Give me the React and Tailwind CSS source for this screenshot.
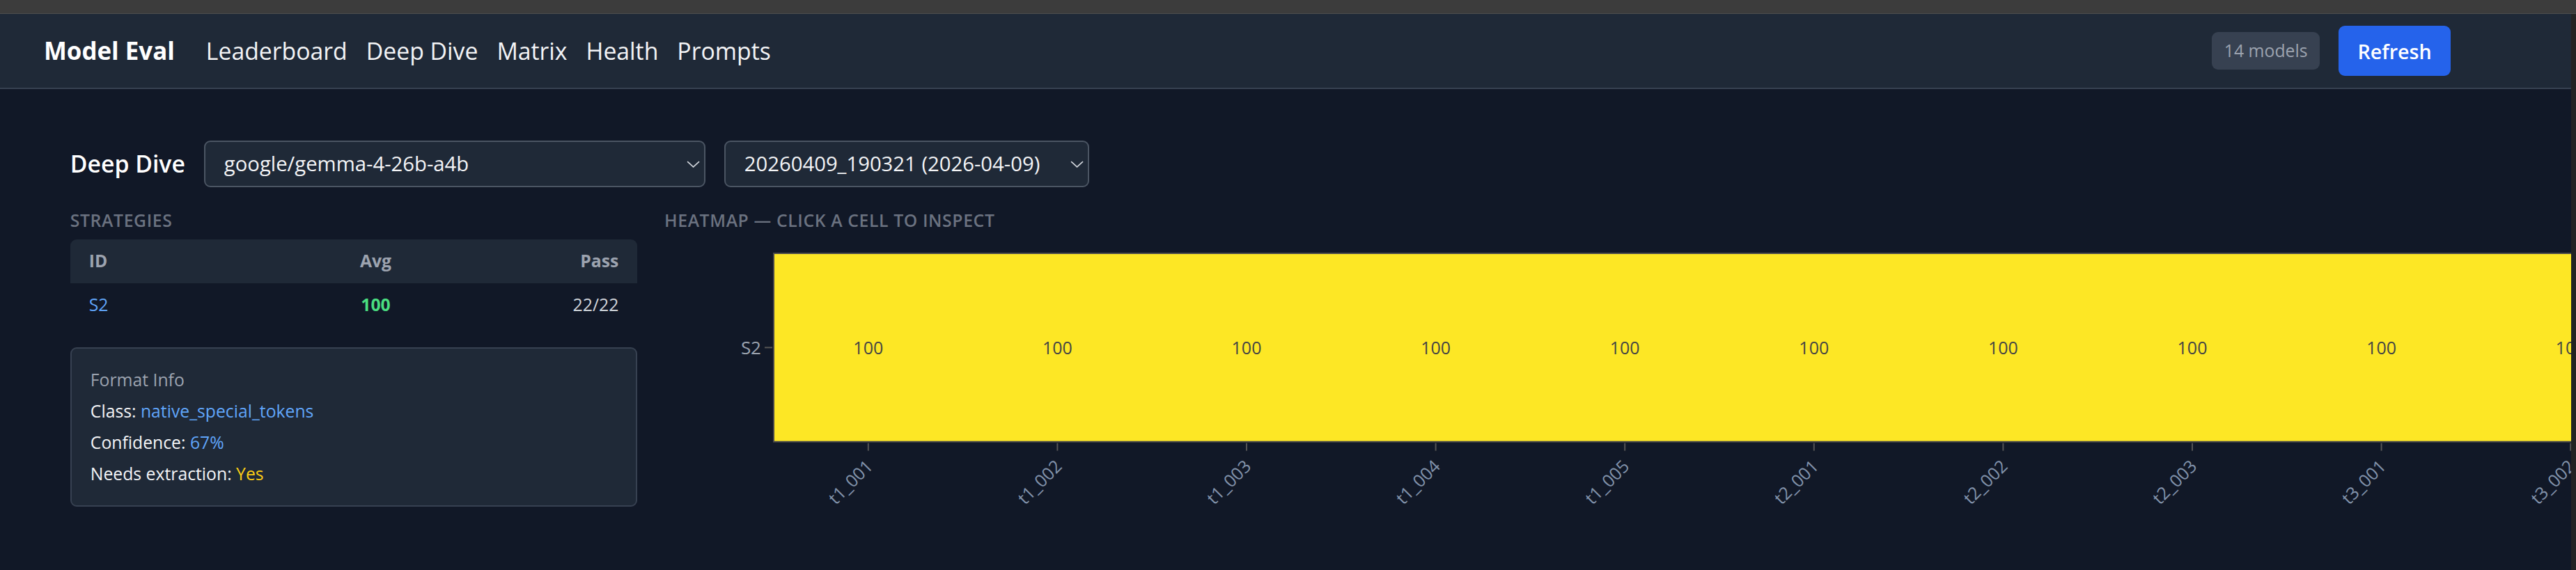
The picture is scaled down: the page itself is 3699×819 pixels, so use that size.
import React from 'react';

const NAV_LINKS = ['Leaderboard', 'Deep Dive', 'Matrix', 'Health', 'Prompts'];

const TASKS = [
  't1_001', 't1_002', 't1_003', 't1_004', 't1_005',
  't2_001', 't2_002', 't2_003', 't3_001', 't3_002', 't3_003',
];

// the whole page is drawn at 2.25x, the svg below is laid out in screen pixels
const SCALE = 2.25;

const Select = ({ value, className }) => (
  <div className={`relative ${className}`}>
    <select
      defaultValue={value}
      className="w-full appearance-none rounded border border-[#4b5563] bg-[#1f2937] py-1 pl-3 pr-6 text-[13px] leading-5 text-[#f3f4f6] outline-none"
    >
      <option value={value}>{value}</option>
    </select>
    <svg
      className="pointer-events-none absolute right-[3.5px] top-1/2 -translate-y-1/2"
      width="8.5"
      height="5"
      viewBox="0 0 17 10"
      fill="none"
    >
      <polyline points="1,1.5 8.5,8.5 16,1.5" stroke="#d1d5db" strokeWidth="1.5" />
    </svg>
  </div>
);

const Heatmap = () => {
  const cell = 271.6;
  const left = 157;
  const top = 20;
  const height = 270.7;
  const mid = top + height / 2;
  const plotW = cell * TASKS.length;
  const W = left + plotW + 20;
  const H = 430;

  return (
    <svg width={W / SCALE} height={H / SCALE} viewBox={`0 0 ${W} ${H}`} className="block">
      <rect x={left} y={top} width={plotW} height={height} fill="#fde725" stroke="#4b4b4b" strokeWidth="2" />
      {/* y axis */}
      <line x1={144} x2={155} y1={mid} y2={mid} stroke="#555" strokeWidth="2" />
      <text x={139} y={mid} textAnchor="end" dominantBaseline="central" fontSize="26" fill="#9ca3af">
        S2
      </text>
      {TASKS.map((t, i) => {
        const cx = left + cell * (i + 0.5);
        return (
          <g key={t}>
            <text x={cx} y={mid} textAnchor="middle" dominantBaseline="central" fontSize="25" fill="#444">
              100
            </text>
            <line x1={cx} x2={cx} y1={top + height + 2} y2={top + height + 13} stroke="#555" strokeWidth="2" />
            <text
              transform={`translate(${cx + 8} ${top + height + 37}) rotate(-45)`}
              textAnchor="end"
              fontSize="25"
              fill="#8293ab"
            >
              {t}
            </text>
          </g>
        );
      })}
    </svg>
  );
};

export default function App() {
  return (
    <div className="flex min-h-screen flex-col overflow-hidden bg-[#111827] font-['Open_Sans','Noto_Sans',sans-serif]">
      <div className="h-[20px] shrink-0 border-b border-[#4e4e4e] bg-[#3c3c3c]" />
      <div className="flex flex-1">
        <div className="min-w-0 flex-1 overflow-hidden">
          <div className="[zoom:2.25]">
            {/* Top nav */}
            <nav className="flex h-12 items-center justify-between border-b border-[#374151] bg-[#1f2937] pl-7 pr-[77px]">
              <div className="flex items-center">
                <span className="mr-[20px] text-[15.5px] font-bold text-white">Model Eval</span>
                <div className="flex gap-3 text-[15px] text-[#f3f4f6]">
                  {NAV_LINKS.map((l) => (
                    <a key={l} href="#" className="hover:text-white">
                      {l}
                    </a>
                  ))}
                </div>
              </div>
              <div className="flex items-center gap-3">
                <span className="rounded bg-[#374151] px-2 py-1 text-[11px] leading-4 text-[#9ca3af]">14 models</span>
                <button className="rounded bg-[#2563eb] px-3 py-1.5 text-[12.75px] font-semibold leading-5 text-white">
                  Refresh
                </button>
              </div>
            </nav>

            <main className="pl-[44.8px] pt-[33px]">
              {/* Header row */}
              <div className="mb-[13px] flex items-center gap-3">
                <h2 className="text-[15px] font-semibold text-white">Deep Dive</h2>
                <Select value="google/gemma-4-26b-a4b" className="w-80" />
                <Select value="20260409_190321 (2026-04-09)" className="w-[233px]" />
              </div>

              <div className="flex items-start gap-[17.2px]">
                {/* Left column */}
                <div className="w-[362px] shrink-0">
                  <div className="mb-1 text-[11px] font-semibold uppercase leading-4 tracking-wide text-[#6b7280]">
                    Strategies
                  </div>
                  <div className="text-[11px] leading-4">
                    <div className="grid h-7 grid-cols-[1fr_80px_115px] items-center rounded-t bg-[#1f2937] px-3 font-bold text-[#9ca3af]">
                      <span>ID</span>
                      <span className="text-center">Avg</span>
                      <span className="text-right">Pass</span>
                    </div>
                    <div className="grid h-7 grid-cols-[1fr_80px_115px] items-center px-3">
                      <span className="text-[#60a5fa]">S2</span>
                      <span className="text-center font-bold text-[#4ade80]">100</span>
                      <span className="text-right text-[#d1d5db]">22/22</span>
                    </div>
                  </div>

                  <div className="mt-[13.3px] rounded border border-[#374151] bg-[#1f2937] p-3 text-[11px] leading-4">
                    <div className="mb-1 font-medium text-[#9ca3af]">Format Info</div>
                    <div className="space-y-1 text-[#f3f4f6]">
                      <div>
                        Class: <span className="text-[#60a5fa]">native_special_tokens</span>
                      </div>
                      <div>
                        Confidence: <span className="text-[#60a5fa]">67%</span>
                      </div>
                      <div>
                        Needs extraction: <span className="text-[#facc15]">Yes</span>
                      </div>
                    </div>
                  </div>
                </div>

                {/* Heatmap */}
                <div className="min-w-0 flex-1">
                  <div className="mb-1 whitespace-nowrap text-[11px] font-semibold uppercase leading-4 tracking-wide text-[#6b7280]">
                    Heatmap — click a cell to inspect
                  </div>
                  <Heatmap />
                </div>
              </div>
            </main>
          </div>
        </div>
        {/* window scrollbar track */}
        <div className="w-[7px] shrink-0 bg-[#232323]" />
      </div>
    </div>
  );
}
